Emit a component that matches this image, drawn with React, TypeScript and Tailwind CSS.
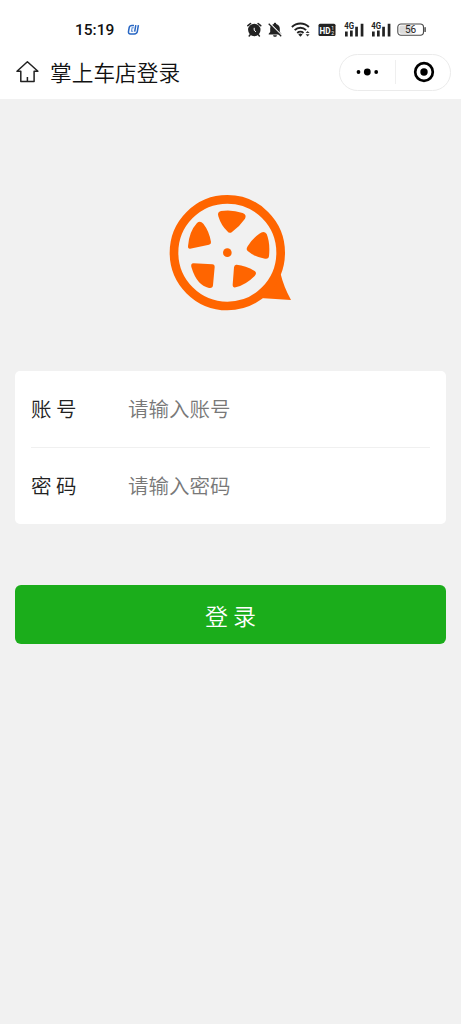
import React from "react";

function AlarmIcon() {
  return (
    <svg width="16" height="18" viewBox="0 0 16 18" className="shrink-0">
      <circle cx="8.3" cy="9" r="6.200" fill="#222" />
      <path d="M1.900 4.700 4.500 2.500M14.700 4.700 12.100 2.500" stroke="#222" strokeWidth="1.600" strokeLinecap="round" />
      <path d="M4.200 13.800 3.200 15M12.400 13.800l1 1.200" stroke="#222" strokeWidth="1.500" strokeLinecap="round" />
      <path d="M8.200 6.800v2.400l1.800 1.700" fill="none" stroke="#fff" strokeWidth="1" />
    </svg>
  );
}

function BellOffIcon() {
  return (
    <svg width="16" height="18" viewBox="0 0 16 18" className="shrink-0">
      <path d="M8 1.700c.8 0 1.200.5 1.200 1.200 2.300.6 3.600 2.300 3.600 4.500v3.600l1.500 1.700v.8H1.700v-.8L3.200 11V7.400c0-2.200 1.300-3.900 3.600-4.500C6.800 2.200 7.200 1.700 8 1.700z" fill="#222" />
      <path d="M6.100 14.200h3.800c0 1-.8 1.600-1.900 1.600s-1.900-.6-1.900-1.600z" fill="#222" />
      <path d="M2.600 2 15.200 14.600" stroke="#fff" strokeWidth="1.100" />
      <path d="M1.700 2.700 14.200 15.200" stroke="#222" strokeWidth="1.300" />
    </svg>
  );
}

function WifiIcon() {
  return (
    <svg width="20" height="18" viewBox="0 0 20 18" className="shrink-0">
      <g fill="none" stroke="#222" strokeWidth="1.900">
        <path d="M.9 6a12 12 0 0 1 17 0" />
        <path d="M3.700 9.100a8 8 0 0 1 11.400 0" />
        <path d="M6.300 12a4.600 4.600 0 0 1 6.200 0" />
      </g>
      <path d="m7.300 13.500 2.100 2.300 2.100-2.300a3 3 0 0 0-4.200 0z" fill="#222" />
      <path d="m14.600 12.100 2-2.200 2 2.200zM14.600 13.300l2 2.200 2-2.200z" fill="#333" />
    </svg>
  );
}

function HdIcon() {
  return (
    <svg width="18" height="14" viewBox="0 0 18 14" className="shrink-0">
      <rect x=".5" y=".8" width="17" height="12.300" rx="1.500" fill="#222" />
      <text x="1.600" y="10.500" fill="#fff" fontFamily="Roboto, sans-serif" fontWeight="700" fontSize="9.500" textLength="11" lengthAdjust="spacingAndGlyphs">HD</text>
      <text x="13.200" y="6.500" fill="#fff" fontFamily="Roboto, sans-serif" fontSize="5">1</text>
      <text x="13.200" y="11.600" fill="#fff" fontFamily="Roboto, sans-serif" fontSize="5">2</text>
    </svg>
  );
}

function SignalIcon() {
  return (
    <svg width="21" height="16" viewBox="0 0 21 16" className="shrink-0">
      <text x=".2" y="7.200" fill="#222" fontFamily="Roboto, sans-serif" fontWeight="700" fontSize="8.500" textLength="9.800" lengthAdjust="spacingAndGlyphs">4G</text>
      <path d="M1 9.500h2.700v5H1zM6 8.400h2.700v6.100H6zM11.200 4.800h2.700v9.700h-2.700zM16.700 1.800h2.700v12.700h-2.700z" fill="#222" />
    </svg>
  );
}

function BatteryIcon() {
  return (
    <svg width="30" height="14" viewBox="0 0 30 14" className="shrink-0">
      <rect x=".8" y="1" width="25.700" height="11.200" rx="3.200" fill="#fff" stroke="#4a4a4a" strokeWidth="1.100" />
      <path d="M4.300 2.400h11v8.400h-11a2 2 0 0 1-2-2V4.400a2 2 0 0 1 2-2z" fill="#dcdcdc" />
      <path d="M28.100 4.800v3.600" stroke="#444" strokeWidth="1.400" strokeLinecap="round" />
      <text x="8" y="10.200" fill="#222" fontFamily="Roboto, sans-serif" fontWeight="400" fontSize="10">56</text>
    </svg>
  );
}

function StatusBar() {
  return (
    <div className="flex h-[45px] items-center pt-[14px] pl-[75px]">
      <span className="w-[51px] font-[Roboto,sans-serif] text-[15.500px] leading-[18px] font-medium text-[#111]">15:19</span>
      <svg width="14" height="14" viewBox="0 0 14 14" className="shrink-0">
        <path d="M8 2.400H6Q3.600 2.400 3.200 4.500L2.500 8.500Q2.100 10.900 4.400 10.900h3.900Q10.900 10.900 11.300 8.700l1.100-6.500M9.800 2.200 8.700 8.600" fill="none" stroke="#2867c4" strokeWidth="1.500" />
        <path d="M7.800 4.800H6.100L5.500 8.300h1.700" fill="none" stroke="#5d8fd8" strokeWidth="1.100" />
      </svg>
      <div className="ml-[106px] flex items-center">
        <AlarmIcon />
        <div className="ml-[5px] flex"><BellOffIcon /></div>
        <div className="ml-2 flex"><WifiIcon /></div>
        <div className="ml-[7px] flex"><HdIcon /></div>
        <div className="ml-2 flex"><SignalIcon /></div>
        <div className="ml-1.5 flex"><SignalIcon /></div>
        <div className="ml-[5px] flex"><BatteryIcon /></div>
      </div>
    </div>
  );
}

function NavBar() {
  return (
    <div className="flex h-[54px] items-center pr-[10px] pl-4">
      <svg width="24" height="24" viewBox="0 0 24 24" fill="none" stroke="#222" strokeWidth="1.500" strokeLinejoin="round" className="shrink-0">
        <path d="M11.400 1.700 1 11.300h3.800V21.400h13.300V11.300h3.800zM11.400 17v4" />
      </svg>
      <h1 className="ml-[10px] text-[21.700px] leading-8 font-[350] text-[#111]">掌上车店登录</h1>
      <div className="ml-auto flex h-[37px] w-[112px] items-center rounded-full border border-[#ebebeb] bg-white">
        <button aria-label="更多" className="flex h-full w-[55px] items-center justify-center">
          <svg width="24" height="12" viewBox="0 0 24 12">
            <circle cx="2.500" cy="6" r="1.900" />
            <circle cx="11.300" cy="6" r="3.400" />
            <circle cx="20.200" cy="6" r="1.900" />
          </svg>
        </button>
        <span className="h-6 w-px bg-[#efefef]" />
        <button aria-label="关闭" className="flex h-full flex-1 items-center justify-center pl-[1px]">
          <svg width="22" height="22" viewBox="0 0 22 22">
            <circle cx="11" cy="11" r="8.800" fill="none" stroke="#000" strokeWidth="2.700" />
            <circle cx="11" cy="11" r="3.700" />
          </svg>
        </button>
      </div>
    </div>
  );
}

function WheelLogo() {
  return (
    <svg width="140" height="135" viewBox="0 0 420 405" fill="#ff6500" className="shrink-0">
      <path d="M362 267 Q371 305 393 345 L300 339 Z" />
      <circle cx="202" cy="203" r="160" fill="#f1f1f1" stroke="#ff6500" strokeWidth="26" />
      <circle cx="202" cy="203" r="13" />
      <path d="M183 78 Q216 73 248 84 Q261 89 255 101 Q239 124 216 141 Q208 147 202 139 Q183 121 175 94 Q171 81 183 78Z" />
      <path d="M111 114 Q120 105 130 116 Q148 139 153 171 Q154 178 147 179 L90 191 Q83 192 84 184 Q87 140 111 114Z" />
      <path d="M298 146 Q312 135 320 147 Q331 174 327 213 Q326 223 315 221 Q284 216 263 198 Q257 193 263 184 Q278 160 298 146Z" />
      <path d="M101 235 L157 238 Q164 238 164 246 L159 301 Q158 311 147 309 Q111 301 95 249 Q90 235 101 235Z" />
      <path d="M230 239 Q257 241 284 258 Q292 264 284 273 Q257 300 227 307 Q218 309 218 299 L222 247 Q223 238 230 239Z" />
    </svg>
  );
}

function Field({ label, placeholder, type }: { label: string; placeholder: string; type: string }) {
  return (
    <label className="flex h-[76px] items-center">
      <span className="mb-[2px] w-[97px] text-[20.500px] leading-8 font-[350] whitespace-pre text-[#222]">{label}</span>
      <input
        type={type}
        placeholder={placeholder}
        className="mb-[2px] h-10 min-w-0 flex-1 bg-transparent text-[20.500px] font-[350] text-[#333] outline-none placeholder:text-[#787878]"
      />
    </label>
  );
}

export default function App() {
  return (
    <div className="flex min-h-screen w-full flex-col bg-[#f1f1f1] font-['Noto_Sans_CJK_SC',sans-serif]">
      <header className="bg-white">
        <StatusBar />
        <NavBar />
      </header>
      <main className="flex flex-col px-[15px] pt-[86px]">
        <div className="flex pl-[145px]">
          <WheelLogo />
        </div>
        <form className="mt-[51px] flex flex-col">
          <div className="rounded-[5px] bg-white px-4">
            <Field label="账 号" placeholder="请输入账号" type="text" />
            <div className="h-px bg-[#f0f0f0]" />
            <Field label="密 码" placeholder="请输入密码" type="password" />
          </div>
          <button type="button" className="mt-[61px] h-[59px] rounded-[6px] bg-[#1bad1b] pt-[1px] text-[23px] font-[350] text-white">
            登 录
          </button>
        </form>
      </main>
    </div>
  );
}
